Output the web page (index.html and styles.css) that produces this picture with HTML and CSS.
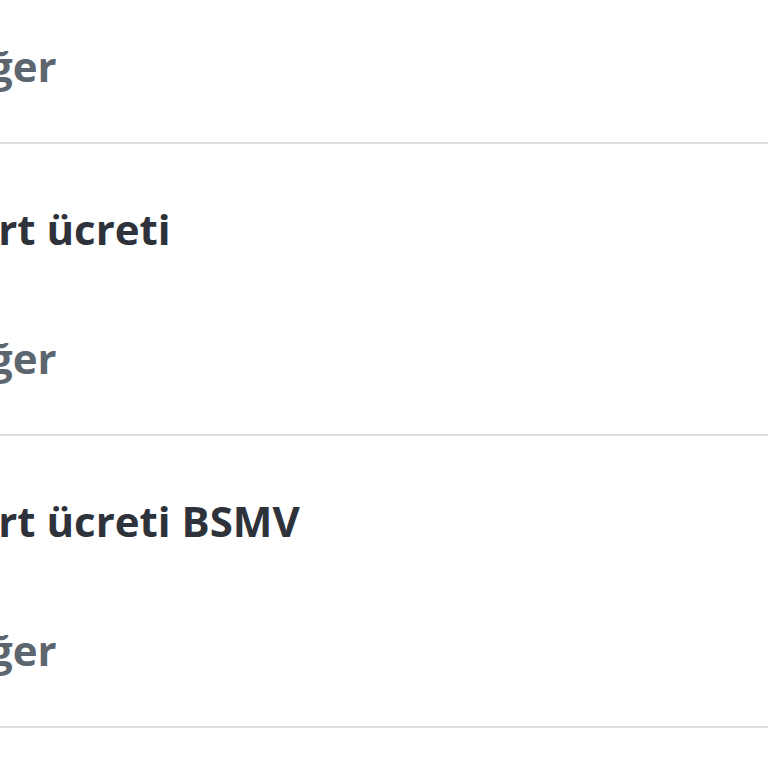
FILE: index.html
```html
<!DOCTYPE html>
<html lang="tr">
<head>
  <meta charset="UTF-8">
  <meta name="viewport" content="width=device-width, initial-scale=1.0">
  <title>Ücretler</title>
  <link rel="stylesheet" href="styles.css">
</head>
<body>
  <div class="liste">
    <div class="satir">
      <div class="baslik">Kart ücreti</div>
      <div class="kategori">Diğer</div>
    </div>
    <div class="satir">
      <div class="baslik">Kart ücreti</div>
      <div class="kategori">Diğer</div>
    </div>
    <div class="satir">
      <div class="baslik">Kart ücreti BSMV</div>
      <div class="kategori">Diğer</div>
    </div>
  </div>
</body>
</html>
```

FILE: styles.css
```css
html, body {
  margin: 0;
  padding: 0;
  background: #fff;
  overflow: hidden;
}
body {
  font-family: "Open Sans", "Noto Sans", sans-serif;
  font-weight: 700;
}
.liste {
  margin-left: -55px;
  margin-top: -148px;
}
.satir {
  padding: 62px 0 54px;
  border-bottom: 2px solid #dcdcdc;
  display: flex;
  flex-direction: column;
  gap: 84px;
}
.baslik {
  font-size: 42px;
  line-height: 45px;
  color: #2e323a;
  white-space: nowrap;
}
.kategori {
  font-size: 42px;
  line-height: 45px;
  color: #5d666e;
}
```
